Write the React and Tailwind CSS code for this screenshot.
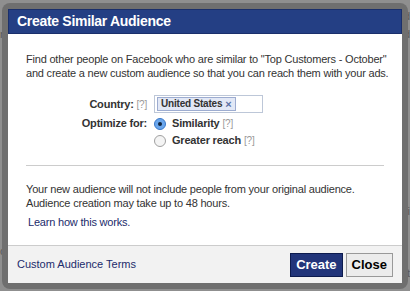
export default function App() {
  const font = { fontFamily: '"Liberation Sans", Arial, sans-serif' };
  return (
    <div
      className="relative w-[410px] h-[291px] overflow-hidden bg-[#8f8f8f] text-[#333]"
      style={font}
    >
      {/* faint page behind the overlay */}
      <div className="absolute left-0 top-[26px] text-[11px] text-[#5a5a5a]">n</div>
      <div className="absolute right-0 top-[8px] text-[11px] text-[#5a5a5a]">d</div>
      <div className="absolute right-0 top-[26px] text-[11px] text-[#5a5a5a]">d</div>
      <div className="absolute right-0 top-[203px] text-[11px] text-[#5a5a5a]">vi</div>
      <div className="absolute right-0 top-[265px] text-[11px] text-[#5a5a5a]">rt</div>
      <div className="absolute left-0 top-[243px] text-[11px] text-[#5a5a5a]">cy</div>

      <div className="absolute left-[2px] top-[3px] w-[406px] h-[286px] rounded-[8px] bg-[#6f6f6f] p-[6px]">
        <div className="flex flex-col h-full bg-white">
          <div className="h-[25px] shrink-0 bg-[#243f84] border border-[#1a2f6b] flex items-center px-[8px]">
            <span className="text-white font-bold text-[14px] tracking-[-0.3px] whitespace-nowrap">
              Create Similar Audience
            </span>
          </div>

          <div className="flex-1 px-[18px] pt-[18px] text-[11px] leading-[15px] tracking-[-0.2px] whitespace-nowrap">
            <p className="leading-[14px]">
              Find other people on Facebook who are similar to "Top Customers - October"
              <br />
              and create a new custom audience so that you can reach them with your ads.
            </p>

            <div className="mt-[15px] grid grid-cols-[121px_1fr] gap-x-[7px] items-center">
              <div className="text-right">
                <span className="font-bold text-[#333]">Country:</span>{" "}
                <span className="text-[#999] text-[10px]">[?]</span>
              </div>
              <div className="w-[109px] h-[18px] border border-[#bdc7d8] flex items-center px-[2px]">
                <span className="h-[14px] flex items-center gap-[3px] px-[3px] bg-[#e2e8f6] border border-[#9dacd0] font-bold text-[10px] text-[#333] leading-none">
                  United States
                  <span className="text-[#5a6fa3] text-[11px]">×</span>
                </span>
              </div>

              <div className="text-right font-bold mt-[3px]">Optimize for:</div>
              <div className="flex items-center gap-[6px] mt-[3px]">
                <span className="w-[12px] h-[12px] rounded-full border border-[#3a78c9] bg-[#6aa6ec] flex items-center justify-center">
                  <span className="w-[4px] h-[4px] rounded-full bg-[#10243f]" />
                </span>
                <span className="font-bold">Similarity</span>
                <span className="text-[#999] text-[10px] -ml-[3px]">[?]</span>
              </div>

              <div />
              <div className="flex items-center gap-[6px] mt-[2px]">
                <span className="w-[12px] h-[12px] rounded-full border border-[#a0a0a0] bg-[#f4f4f4]" />
                <span className="font-bold">Greater reach</span>
                <span className="text-[#999] text-[10px] -ml-[3px]">[?]</span>
              </div>
            </div>

            <div className="mt-[17px] h-[1px] bg-[#cccccc]" />

            <p className="mt-[16px] leading-[14px]">
              Your new audience will not include people from your original audience.
              <br />
              Audience creation may take up to 48 hours.
            </p>
            <p className="mt-[5px] ml-[2px] text-[#1c2b6b]">Learn how this works.</p>
          </div>

          <div className="h-[38px] shrink-0 bg-[#f2f2f2] border-t border-[#cccccc] flex items-center justify-between pl-[9px] pr-[9px]">
            <span className="text-[11px] text-[#1c2b6b]">Custom Audience Terms</span>
            <div className="flex gap-[3px]">
              <button className="h-[24px] px-[5px] bg-[#22357a] border border-[#0d1b4e] text-white font-bold text-[13px]">
                Create
              </button>
              <button className="h-[24px] px-[5px] bg-[#ececec] border border-[#999] text-black font-bold text-[13px]">
                Close
              </button>
            </div>
          </div>
        </div>
      </div>
    </div>
  );
}
